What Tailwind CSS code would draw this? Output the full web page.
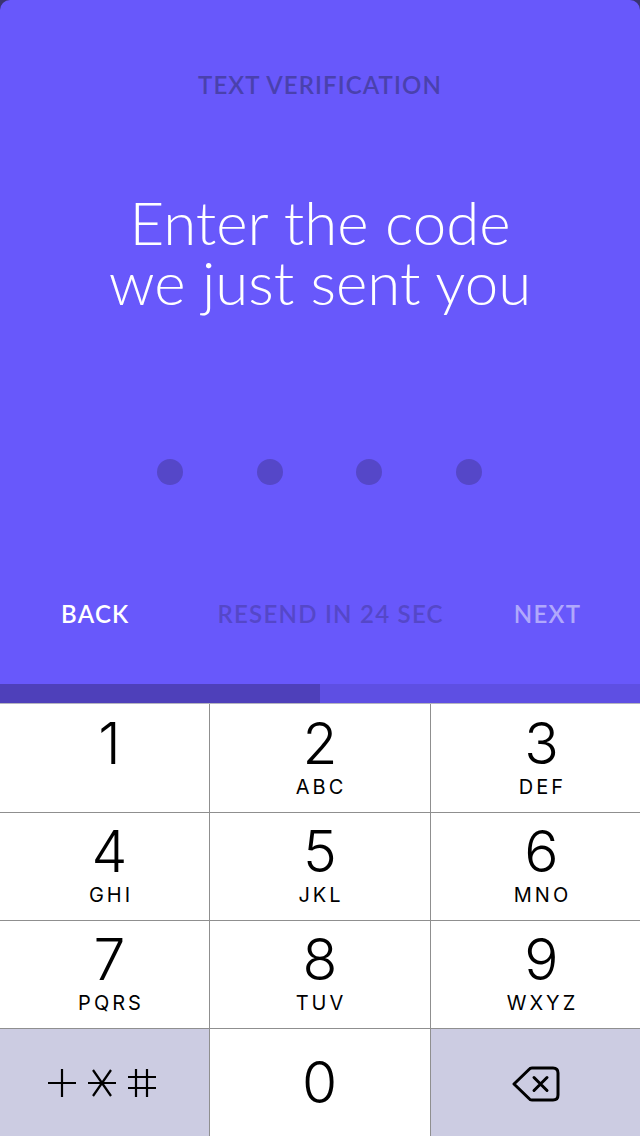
<!DOCTYPE html>
<html><head><meta charset="utf-8">
<script src="https://cdn.jsdelivr.net/npm/@tailwindcss/browser@4"></script>
</head>
<body class="bg-[#3a3470]">
<div class="w-[640px] h-[1136px] flex flex-col overflow-hidden font-['Inter',sans-serif]">
  <main class="h-[684px] shrink-0 bg-[#6858fb] rounded-t-[10px] flex flex-col items-center font-['Lato',sans-serif]">
    <p class="mt-[70px] h-[30px] leading-[30px] text-[24px] font-semibold tracking-[1.1px] text-[#4a41ad]">TEXT VERIFICATION</p>
    <h1 class="mt-[92px] text-[60px] leading-[60px] font-light text-white text-center">Enter the code<br>we just sent you</h1>
    <div class="mt-[147px] self-start ml-[157px] flex">
      <span class="size-[26px] rounded-full bg-[#5547c8]"></span>
      <span class="ml-[74px] size-[26px] rounded-full bg-[#5547c8]"></span>
      <span class="ml-[73px] size-[26px] rounded-full bg-[#5547c8]"></span>
      <span class="ml-[74px] size-[26px] rounded-full bg-[#5547c8]"></span>
    </div>
    <nav class="mt-[115px] w-full h-[28px] flex items-center text-[24px] leading-[28px] font-semibold tracking-[1.25px]">
      <span class="ml-[61px] text-white">BACK</span>
      <span class="ml-[88px] text-[#5547c8]">RESEND IN 24 SEC</span>
      <span class="ml-[70px] text-[#b0a8fc]">NEXT</span>
    </nav>
  </main>
  <div class="h-[19px] shrink-0 bg-[#5e4fe3] flex"><div class="w-[320px] bg-[#4e40ba]"></div></div>
  <div class="flex-1 grid grid-cols-[210px_221px_209px] grid-rows-[109px_108px_108px_107px] bg-white border-t border-[#b5b5c0]">
    <div class="border-r border-b border-[#8f8f8f] flex flex-col items-center pt-[12px] pl-[10px]"><span class="text-[57px] leading-[56px] font-[350] text-black">1</span></div>
    <div class="border-r border-b border-[#8f8f8f] flex flex-col items-center pt-[12px]"><span class="text-[57px] leading-[56px] font-[350] text-black">2</span><span class="mt-[3px] text-[20px] leading-[24px] tracking-[3px] pl-[2px] text-black">ABC</span></div>
    <div class="border-b border-[#8f8f8f] flex flex-col items-center pt-[12px] pl-[12px]"><span class="text-[57px] leading-[56px] font-[350] text-black">3</span><span class="mt-[3px] text-[20px] leading-[24px] tracking-[3px] pl-[2px] text-black">DEF</span></div>
    <div class="border-r border-b border-[#8f8f8f] flex flex-col items-center pt-[11px] pl-[10px]"><span class="text-[57px] leading-[56px] font-[350] text-black">4</span><span class="mt-[3px] text-[20px] leading-[24px] tracking-[3px] pl-[3px] text-black">GHI</span></div>
    <div class="border-r border-b border-[#8f8f8f] flex flex-col items-center pt-[11px]"><span class="text-[57px] leading-[56px] font-[350] text-black">5</span><span class="mt-[3px] text-[20px] leading-[24px] tracking-[3px] pl-[2px] text-black">JKL</span></div>
    <div class="border-b border-[#8f8f8f] flex flex-col items-center pt-[11px] pl-[12px]"><span class="text-[57px] leading-[56px] font-[350] text-black">6</span><span class="mt-[3px] text-[20px] leading-[24px] tracking-[3px] pl-[2px] text-black">MNO</span></div>
    <div class="border-r border-b border-[#8f8f8f] flex flex-col items-center pt-[11px] pl-[10px]"><span class="text-[57px] leading-[56px] font-[350] text-black">7</span><span class="mt-[3px] text-[20px] leading-[24px] tracking-[3px] pl-[3px] text-black">PQRS</span></div>
    <div class="border-r border-b border-[#8f8f8f] flex flex-col items-center pt-[11px]"><span class="text-[57px] leading-[56px] font-[350] text-black">8</span><span class="mt-[3px] text-[20px] leading-[24px] tracking-[3px] pl-[2px] text-black">TUV</span></div>
    <div class="border-b border-[#8f8f8f] flex flex-col items-center pt-[11px] pl-[12px]"><span class="text-[57px] leading-[56px] font-[350] text-black">9</span><span class="mt-[3px] text-[20px] leading-[24px] tracking-[3px] pl-[2px] text-black">WXYZ</span></div>
    <div class="border-r border-[#8f8f8f] bg-[#cccce2] flex items-center justify-center">
      <svg width="116" height="32" viewBox="0 0 116 32" fill="none" stroke="#000" stroke-width="2.2">
        <path d="M1 16H29M15 2V30"/>
        <path d="M41 16H69M46 3L64 29M64 3L46 29"/>
        <path d="M81 10H109M81 21H109M89 2V30M100 2V30"/>
      </svg>
    </div>
    <div class="border-r border-[#8f8f8f] flex items-center justify-center"><span class="pr-[1px] text-[57px] leading-[56px] font-[350] text-black">0</span></div>
    <div class="bg-[#cccce2] flex items-center justify-center">
      <svg width="48" height="36" viewBox="0 0 48 36" fill="none" stroke="#000" stroke-width="3" stroke-linejoin="round" stroke-linecap="round" class="mt-[2px]">
        <path d="M2 18L17 3.500Q18 2 20 2H41Q46 2 46 7V29Q46 34 41 34H20Q18 34 17 32.500Z"/>
        <path d="M22 11.500L35 24.500M35 11.500L22 24.500"/>
      </svg>
    </div>
  </div>
</div>
</body></html>
